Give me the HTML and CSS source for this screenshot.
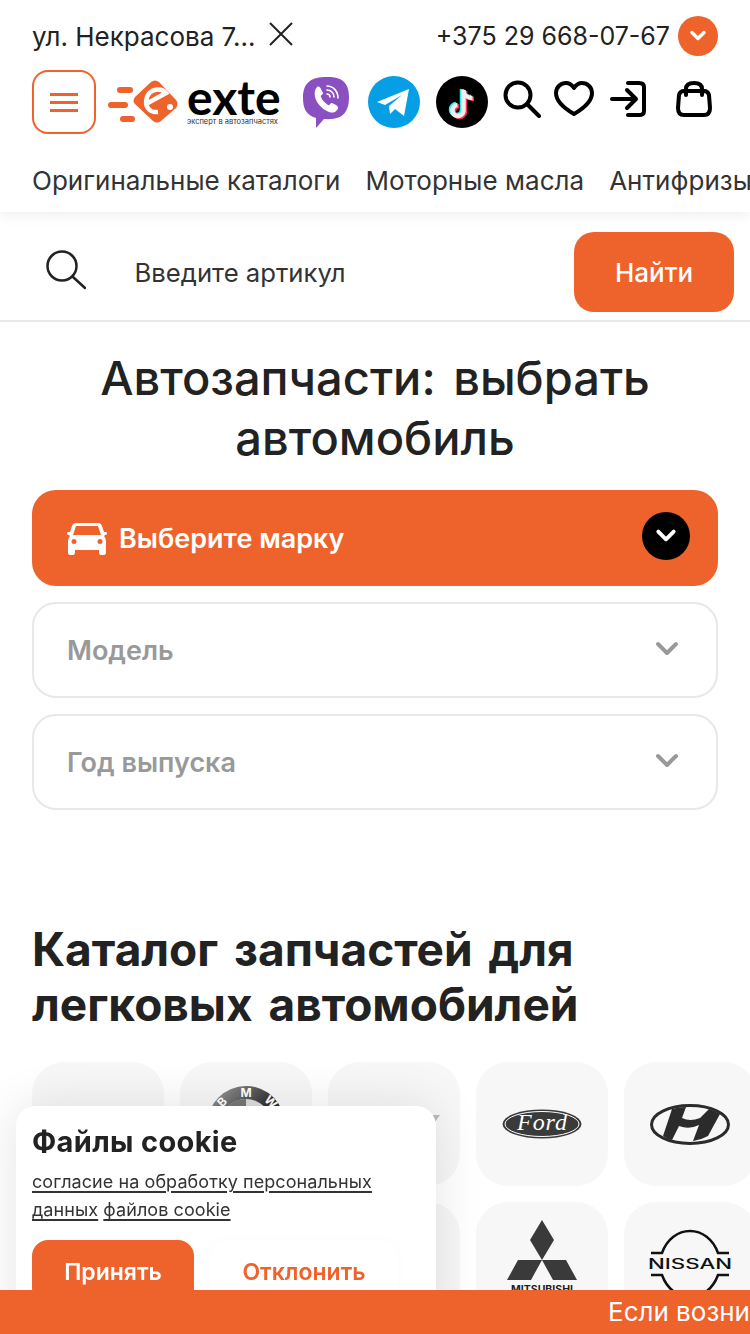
FILE: index.html
```html
<!DOCTYPE html>
<html lang="ru">
<head>
<meta charset="utf-8">
<title>exte</title>
<link rel="stylesheet" href="styles.css">
</head>
<body>
<header class="header">
  <div class="top-row">
    <div class="address"><span>ул. Некрасова 7...</span>
      <svg class="close" viewBox="0 0 24 24"><path d="M1 1 23 23M23 1 1 23"/></svg>
    </div>
    <div class="phone"><span>+375 29 668-07-67</span>
      <span class="round-btn"><svg viewBox="0 0 20 20"><path d="M4 6.500 10 12.500 16 6.500"/></svg></span>
    </div>
  </div>
  <div class="tools-row">
    <button class="burger"><i></i><i></i><i></i></button>
    <a class="logo">
      <svg class="logo-mark" viewBox="0 0 70 43">
        <g fill="#ee622b"><rect x="9" y="7" width="16" height="6" rx="3"/><rect y="22" width="20" height="6" rx="3"/><rect x="12" y="36" width="15" height="6" rx="3"/>
        <path d="M27 17 43 2q4-3 8 0L68 20q3 4 0 8L53 41q-4 3-8 0L27 24q-3-3 0-7z"/></g>
        <path d="M38 24 58 13C53 7 42 9 39 17 36 26 41 33 50 32" fill="none" stroke="#fff" stroke-width="4.500"/>
        <circle cx="62" cy="27" r="3" fill="#fff"/>
      </svg>
      <span class="logo-text"><b>exte</b><small>эксперт в автозапчастях</small></span>
    </a>
    <svg class="viber" viewBox="0 0 46 51"><path fill="#8a4fc0" d="M23 0c12 0 23 2 23 20 0 19-10 23-25 22l-8 9v-10C3 38 0 31 0 21 0 4 10 0 23 0z"/><path fill="#fff" d="M14 10c2-1 3 0 4 2l2 4c0 2-3 2-2 4 1 3 4 6 7 8 2 1 2-2 4-2l4 2c2 1 3 3 1 5-2 3-5 3-8 2-7-3-12-8-14-15-1-4 0-8 2-10z"/><path fill="none" stroke="#fff" stroke-width="1.600" stroke-linecap="round" d="M24 9c6 0 11 5 11 12M24 13c4 0 7 3 7 7M24 17c2 0 3 1 3 3"/></svg>
    <svg class="social telegram" viewBox="0 0 52 52"><circle cx="26" cy="26" r="26" fill="#069fe6"/><path fill="#fff" d="M9 26 41 13 36 40 27 33 22 38 21 30 34 19 17 29z"/></svg>
    <svg class="social tiktok" viewBox="0 0 52 52"><circle cx="26" cy="26" r="26" fill="#000"/><path fill="none" stroke="#25f4ee" stroke-width="4.500" d="M26 13v21a5.500 5.500 0 1 1-6-6M26 13c0 5 4 8 9 8"/><path fill="none" stroke="#fe2c55" stroke-width="4.500" d="M29 15v21a5.500 5.500 0 1 1-6-6M29 15c0 5 4 8 9 8"/><path fill="none" stroke="#eee" stroke-width="4.500" d="M27.500 14v21a5.500 5.500 0 1 1-6-6M27.500 14c0 5 4 8 9 8"/></svg>
    <svg class="tool t-search" viewBox="0 0 38 38"><circle cx="15" cy="15" r="12.500"/><path d="M24 24 36 36"/></svg>
    <svg class="tool t-heart" viewBox="0 0 40 36"><path d="M20 33C8 26 2 19 2 12 2 6 7 2 12 2c4 0 6 2 8 5 2-3 4-5 8-5 5 0 10 4 10 10 0 7-6 14-18 21z"/></svg>
    <svg class="tool t-login" viewBox="0 0 36 36"><path d="M2 18H25M17 9l9 9-9 9M18 2h11q5 0 5 4v24q0 4-5 4H18"/></svg>
    <svg class="tool t-bag" viewBox="0 0 36 36"><path d="M8 10h20q4 0 5 4l1 13q0 7-6 7H8q-6 0-6-7l1-13q1-4 5-4zM10 14V8q0-6 8-6t8 6v6"/></svg>
  </div>
  <nav class="nav"><a>Оригинальные каталоги</a><a>Моторные масла</a><a>Антифризы</a></nav>
</header>

<form class="search">
  <svg class="search-icon" viewBox="0 0 40 40"><circle cx="16" cy="16" r="14.500"/><path d="M27 27 39 38"/></svg>
  <span class="search-placeholder">Введите артикул</span>
  <button class="search-btn" type="button">Найти</button>
</form>

<main class="main">
  <h1 class="title">Автозапчасти: выбрать автомобиль</h1>
  <div class="selects">
    <div class="select select-active">
      <svg class="car" viewBox="0 0 40 33"><path fill="#fff" d="M9 1h22q3 0 4 3l2 6h2q1 0 1 1.500T38 13l-1 1q2 2 2 5v11q0 3-2 3h-3q-2 0-2-3v-2H8v2q0 3-2 3H3q-2 0-2-3V19q0-3 2-5l-1-1q-2 0-2-1.500T1 10h2l2-6q1-3 4-3z"/><path fill="#ee622b" d="M9 4h22l3 9H6z"/><circle cx="7" cy="19.500" r="2.500" fill="#ee622b"/><circle cx="33" cy="19.500" r="2.500" fill="#ee622b"/></svg>
      <span>Выберите марку</span>
      <span class="select-chevron"><svg viewBox="0 0 20 20"><path d="M3 6 10 13 17 6"/></svg></span>
    </div>
    <div class="select"><span>Модель</span><svg class="chevron" viewBox="0 0 24 16"><path d="M3 3 12 12 21 3"/></svg></div>
    <div class="select"><span>Год выпуска</span><svg class="chevron" viewBox="0 0 24 16"><path d="M3 3 12 12 21 3"/></svg></div>
  </div>

  <h2 class="catalog-title">Каталог запчастей для легковых автомобилей</h2>
  <div class="brands">
    <div class="brand"></div>
    <div class="brand brand-bmw">
      <svg viewBox="0 0 78 78"><defs><linearGradient id="bmwRing" x1="0" y1="0" x2="1" y2="1"><stop offset="0" stop-color="#aaa"/><stop offset=".5" stop-color="#333"/><stop offset="1" stop-color="#111"/></linearGradient></defs><circle cx="39" cy="39" r="39" fill="url(#bmwRing)"/><circle cx="39" cy="39" r="26" fill="#ddd"/><path d="M39 13a26 26 0 0 0-26 26h26zM39 39v26a26 26 0 0 0 26-26z" fill="#777"/><text x="39" y="11" class="bmw-text">M</text><text x="18" y="19" class="bmw-text" transform="rotate(-45 18 19)">B</text><text x="61" y="19" class="bmw-text" transform="rotate(45 61 19)">W</text></svg>
    </div>
    <div class="brand">
      <svg class="logo-third" viewBox="0 0 100 30"><path fill="#bbb" d="M0 6H96L91 13H5z"/></svg>
    </div>
    <div class="brand">
      <svg class="logo-ford" viewBox="0 0 80 30"><ellipse cx="40" cy="15" rx="39.500" ry="14.500" fill="#3a3a3a"/><ellipse cx="40" cy="15" rx="37" ry="12.500" fill="none" stroke="#fff"/><text x="40" y="21" class="ford-text" textLength="50">Ford</text></svg>
    </div>
    <div class="brand">
      <svg class="logo-hyundai" viewBox="0 0 80 41"><ellipse cx="40" cy="20.500" rx="38.500" ry="19" fill="none" stroke="#2b2b2b" stroke-width="3"/><path fill="#2b2b2b" d="M22 5 13 32q4 3 9 4l7-14q10 4 20-1L43 37q8-1 15-5L70 10q-5-3-11-5L50 14q-10 4-18 0l4-11q-7 0-14 2z"/></svg>
    </div>
    <div class="brand"></div>
    <div class="brand"></div>
    <div class="brand"></div>
    <div class="brand brand-top">
      <svg class="logo-mitsu" viewBox="0 0 70 90"><path fill="#3a3a3a" d="M35 0 47 20 35 40 23 20zM35 40H11L0 60h24zM35 40h24l11 20H46z"/><text x="35" y="73" class="mitsu-text">MITSUBISHI</text></svg>
    </div>
    <div class="brand brand-top">
      <svg class="logo-nissan" viewBox="0 0 86 76"><path fill="none" stroke="#111" stroke-width="2.500" d="M4 25H15C20 11 31 3 43 3s23 8 28 22H82M4 47H15C20 61 31 69 43 69s23-8 28-22H82"/><text x="43" y="41" class="nissan-text" textLength="84" lengthAdjust="spacingAndGlyphs">NISSAN</text></svg>
    </div>
  </div>
</main>

<aside class="cookie">
  <h3 class="cookie-title">Файлы cookie</h3>
  <p class="cookie-text"><a>согласие на обработку персональных данных</a> <a>файлов cookie</a></p>
  <div class="cookie-actions">
    <button class="cookie-accept">Принять</button>
    <button class="cookie-decline">Отклонить</button>
  </div>
</aside>
<div class="ticker"><span>Если возникли вопросы, свяжитесь с нами</span></div>
</body>
</html>
```
FILE: styles.css
```css
* { box-sizing: border-box; }
html, body { margin: 0; height: 1334px; overflow: hidden; background: #fff; }
body { font-family: "Inter", "Noto Sans", sans-serif; color: #222; }
svg { display: block; flex: none; }
button { font: inherit; border: 0; padding: 0; }

.header { height: 212px; padding: 16px 0 0 32px; box-shadow: 0 2px 14px rgba(0,0,0,.08); position: relative; }
.top-row { display: flex; justify-content: space-between; align-items: center; height: 40px; padding-right: 32px; font-size: 25px; color: #222; }
.address, .phone { display: flex; align-items: center; }
.address { font-size: 26px; }
.close { width: 24px; height: 24px; margin: -4px 0 0 13px; fill: none; stroke: #222; stroke-width: 2; }
.phone { gap: 8px; }
.round-btn { width: 40px; height: 40px; border-radius: 50%; background: #ee622b; display: flex; align-items: center; justify-content: center; }
.round-btn svg { width: 20px; height: 20px; fill: none; stroke: #fff; stroke-width: 3.500; stroke-linecap: round; stroke-linejoin: round; }

.tools-row { display: flex; align-items: center; height: 64px; margin-top: 14px; }
.burger { width: 64px; height: 64px; border: 2px solid #ee622b; border-radius: 16px; background: #fff; display: flex; flex-direction: column; align-items: center; justify-content: center; gap: 5px; }
.burger i { width: 28px; height: 3px; background: #ee622b; display: block; }
.logo { display: flex; align-items: center; margin-left: 12px; width: 172px; gap: 9px; }
.logo-mark { width: 70px; height: 43px; margin-top: -2px; }
.logo-text { display: flex; flex-direction: column; width: 93px; margin-top: 2px; }
.logo-text b { font-family: "Lato", sans-serif; font-size: 48px; font-weight: 700; line-height: 34px; color: #000; }
.logo-text small { font-size: 7.500px; line-height: 9px; color: #333; white-space: nowrap; margin-top: 3px; }
.viber { width: 46px; height: 51px; margin: 1px 0 0 23px; }
.social { width: 52px; height: 52px; }
.telegram { margin-left: 19px; }
.tiktok { margin-left: 16px; }
.tool { fill: none; stroke: #000; stroke-width: 4; stroke-linecap: round; stroke-linejoin: round; }
.t-search { width: 38px; height: 38px; margin: -6px 0 0 15px; }
.t-heart { width: 40px; height: 36px; margin: -6px 0 0 13px; }
.t-login { width: 36px; height: 36px; margin: -6px 0 0 16px; }
.t-bag { width: 36px; height: 36px; margin: -6px 0 0 30px; }

.nav { display: flex; gap: 25px; margin-top: 30px; font-size: 26px; letter-spacing: .03px; line-height: 34px; color: #333; white-space: nowrap; overflow: hidden; }

.search { display: flex; align-items: center; height: 110px; padding: 20px 16px 8px 46px; border-bottom: 2px solid #e8e8e8; }
.search-icon { width: 40px; height: 40px; margin-top: -4px; fill: none; stroke: #222; stroke-width: 2.500; stroke-linecap: round; }
.search-placeholder { margin-left: 48.500px; font-size: 25.700px; color: #333; flex: 1; }
.search-btn { width: 160px; height: 80px; border-radius: 20px; background: #ee622b; color: #fff; font-size: 26px; font-weight: 500; }

.main { padding: 0 32px; }
.title { margin: 26px 0 0; font-size: 47px; word-spacing: 5px; line-height: 60px; font-weight: 500; text-align: center; color: #222; padding: 0 40px; }
.selects { display: flex; flex-direction: column; gap: 16px; margin-top: 22px; }
.select { display: flex; align-items: center; justify-content: space-between; height: 96px; border: 2px solid #e8e8e8; border-radius: 24px; padding: 0 37px 0 33px; font-size: 27px; font-weight: 600; color: #999; }
.select-active { background: #ee622b; border: 0; color: #fff; justify-content: flex-start; padding: 0 28px 0 35px; gap: 12px; }
.car { width: 40px; height: 33px; }
.select-chevron { margin: -4px 0 0 auto; width: 48px; height: 48px; border-radius: 50%; background: #000; display: flex; align-items: center; justify-content: center; }
.select-chevron svg { width: 22px; height: 22px; fill: none; stroke: #fff; stroke-width: 3.500; stroke-linecap: round; stroke-linejoin: round; }
.chevron { width: 24px; height: 16px; margin-top: -3px; fill: none; stroke: #999; stroke-width: 4; stroke-linecap: round; stroke-linejoin: round; }

.catalog-title { margin: 112px 0 0; font-size: 46px; word-spacing: 5px; line-height: 55px; font-weight: 700; color: #222; width: 620px; }
.brands { display: grid; grid-template-columns: repeat(5, 132px); grid-auto-rows: 124px; gap: 16px; margin-top: 30px; }
.brand { border-radius: 32px; background: #f7f7f7; display: flex; align-items: center; justify-content: center; }
.brand-bmw { align-items: flex-start; padding-top: 24px; }
.brand-bmw svg { width: 78px; height: 78px; }
.bmw-text { font-size: 12px; font-weight: 700; fill: #fff; text-anchor: middle; }
.logo-third { width: 100px; height: 30px; }
.logo-ford { width: 80px; height: 30px; }
.ford-text { font-family: "Liberation Serif", serif; font-style: italic; font-size: 24px; fill: #fff; text-anchor: middle; }
.logo-hyundai { width: 80px; height: 41px; }
.brand-top { align-items: flex-start; }
.logo-mitsu { width: 70px; height: 90px; margin-top: 18px; }
.mitsu-text { font-size: 10.500px; font-weight: 700; fill: #222; text-anchor: middle; }
.logo-nissan { width: 86px; height: 76px; margin-top: 26px; }
.nissan-text { font-size: 14px; font-weight: 500; fill: #111; text-anchor: middle; }

.cookie { position: fixed; left: 16px; top: 1106px; width: 420px; height: 240px; border-radius: 20px; background: #fff; padding: 16px; box-shadow: 0 0 50px rgba(0,0,0,.11); }
.cookie-title { margin: 0; font-size: 29px; letter-spacing: .35px; line-height: 40px; font-weight: 700; color: #222; }
.cookie-text { margin: 6px 0 0; font-size: 18px; letter-spacing: .07px; line-height: 28px; color: #333; }
.cookie-text a { text-decoration: underline; text-decoration-thickness: 2px; text-underline-offset: 3px; }
.cookie-actions { display: flex; gap: 16px; margin-top: 16px; }
.cookie-accept { width: 162px; height: 64px; border-radius: 16px; background: #ee622b; color: #fff; font-size: 23px; font-weight: 600; }
.cookie-decline { width: 188px; height: 64px; border-radius: 16px; background: #fff; color: #ee622b; font-size: 23px; font-weight: 600; box-shadow: 0 0 8px rgba(0,0,0,.025); }

.ticker { position: fixed; left: 0; bottom: 0; width: 750px; height: 44px; background: #ee622b; color: #fff; font-size: 26px; line-height: 44px; padding-left: 608px; white-space: nowrap; overflow: hidden; }
```
